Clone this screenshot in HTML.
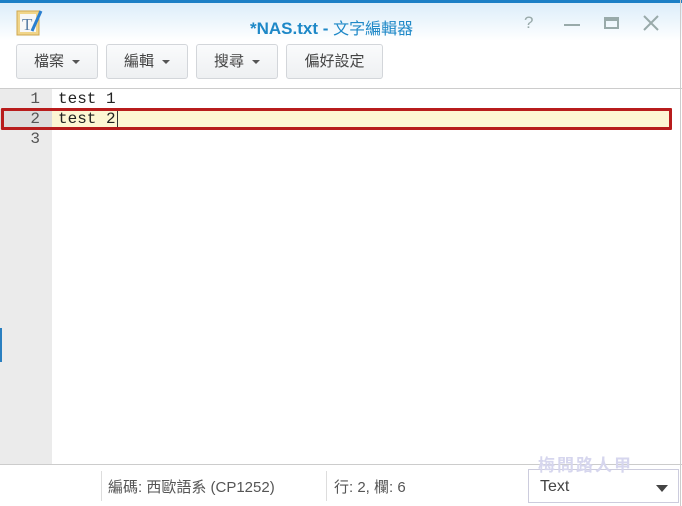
<!DOCTYPE html>
<html><head><meta charset="utf-8"><style>
*{margin:0;padding:0;box-sizing:border-box}
body{width:682px;height:506px;overflow:hidden;background:#fff;font-family:"Liberation Sans","Noto Sans CJK TC",sans-serif;position:relative}
.top{position:absolute;left:0;top:0;width:682px;height:3px;background:#1b7fc6}
.title{position:absolute;left:0;top:3px;width:682px;height:38px;background:linear-gradient(#dcedfa,#fff)}
.t{position:absolute;left:250px;top:12px;font-size:17px;font-weight:bold;color:#1e88c7}
.t span{font-weight:normal;font-size:16px}
.btn{position:absolute;top:44px;height:35px;border:1px solid #d3d6da;border-radius:3px;background:linear-gradient(#fafbfc,#eef0f2);font-size:15px;color:#444;text-align:center;line-height:33px}
.car{display:inline-block;width:0;height:0;border-left:4px solid transparent;border-right:4px solid transparent;border-top:4px solid #555;vertical-align:middle;margin-left:8px}
.sep{position:absolute;left:0;top:88px;width:682px;height:1px;background:#ccc}
.gut{position:absolute;left:0;top:89px;width:52px;height:375px;background:#ebebeb}
.ln{position:absolute;left:0;width:40px;text-align:right;font:16px "Liberation Mono",monospace;color:#555}
.code{position:absolute;left:58px;font:16px "Liberation Mono",monospace;color:#222}
.hl{position:absolute;left:52px;top:109px;width:619px;height:20px;background:#fdf6d3}
.red{position:absolute;left:1px;top:108px;width:671px;height:22px;border:3px solid #b81c1c;border-radius:1px}
.status{position:absolute;left:0;top:464px;width:682px;height:42px;border-top:1px solid #ccc;background:#fff;font-size:15px;color:#555}
.rb{position:absolute;right:1px;top:0;width:1px;height:506px;background:#ccc}
</style></head><body>
<div class="top"></div>
<div class="title">
<svg style="position:absolute;left:16px;top:6px" width="30" height="28" viewBox="0 0 30 28"><rect x="1" y="2" width="22" height="24" fill="#f0d58a" stroke="#cfa850"/><rect x="4" y="5" width="16" height="18" fill="#f7f7f7"/><text x="6" y="21" font-family="Liberation Serif" font-size="17" fill="#5a7ea6">T</text><path d="M25 2 L16 22" stroke="#2a7fd0" stroke-width="3"/></svg>
<div class="t">*NAS.txt - <span>文字編輯器</span></div>
<div style="position:absolute;left:524px;top:10px;font-size:17px;color:#9aa">?</div>
<div style="position:absolute;left:564px;top:21px;width:16px;height:2px;background:#9aa"></div>
<div style="position:absolute;left:604px;top:14px;width:15px;height:12px;border:2px solid #9aa;border-top-width:4px"></div>
<svg style="position:absolute;left:643px;top:12px" width="16" height="16"><path d="M1 1L15 15M15 1L1 15" stroke="#9aa" stroke-width="2"/></svg>
</div>
<div class="btn" style="left:16px;width:82px">檔案<i class="car"></i></div>
<div class="btn" style="left:106px;width:82px">編輯<i class="car"></i></div>
<div class="btn" style="left:196px;width:82px">搜尋<i class="car"></i></div>
<div class="btn" style="left:286px;width:97px">偏好設定</div>
<div class="sep"></div>
<div class="gut"></div>
<div class="hl"></div>
<div style="position:absolute;left:0;top:109px;width:52px;height:20px;background:#dcdcdc"></div>
<div class="ln" style="top:90px">1</div><div class="ln" style="top:110px">2</div><div class="ln" style="top:130px">3</div>
<div class="code" style="top:90px">test 1</div><div class="code" style="top:110px">test 2<span style="border-left:1px solid #333;margin-left:1px"></span></div>
<div class="red"></div>
<div style="position:absolute;left:0;top:328px;width:2px;height:34px;background:#2a7fc0"></div>
<div class="status">
<div style="position:absolute;left:101px;top:6px;width:1px;height:30px;background:#ddd"></div>
<div style="position:absolute;left:108px;top:11px">編碼: 西歐語系 (CP1252)</div>
<div style="position:absolute;left:326px;top:6px;width:1px;height:30px;background:#ddd"></div>
<div style="position:absolute;left:334px;top:11px">行: 2, 欄: 6</div>
<div style="position:absolute;left:528px;top:4px;width:151px;height:34px;border:1px solid #ccd;font-size:16px;color:#444;padding:8px 0 0 11px">Text<span style="position:absolute;right:10px;top:15px;border-left:6px solid transparent;border-right:6px solid transparent;border-top:7px solid #444"></span></div>
<div style="position:absolute;left:538px;top:-14px;font-size:17px;color:#d6d6ee;font-weight:bold;letter-spacing:2px">梅問路人甲</div>
</div>
<div class="rb"></div>
</body></html>
